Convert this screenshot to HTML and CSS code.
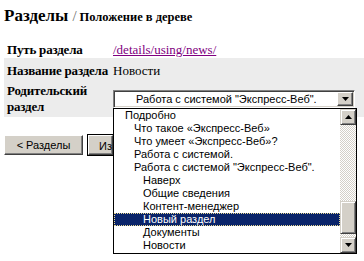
FILE: index.html
```html
<!DOCTYPE html>
<html lang="ru">
<head>
<meta charset="utf-8">
<title>Разделы / Положение в дереве</title>
<link rel="stylesheet" href="styles.css">
</head>
<body>
<h1 class="title"><span class="main">Разделы</span><span class="sep">/</span><span class="sub">Положение в дереве</span></h1>
<div class="form">
  <div class="row r1">
    <div class="label">Путь раздела</div>
    <div class="value"><a class="path" href="#">/details/using/news/</a></div>
  </div>
  <div class="row alt r2">
    <div class="label">Название раздела</div>
    <div class="value">Новости</div>
  </div>
  <div class="row alt r3">
    <div class="label">Родительский<br>раздел</div>
    <div class="value">
      <div class="select">
        <div class="select-text">Работа с системой "Экспресс-Веб".</div>
        <div class="select-btn"><svg width="7" height="4" viewBox="0 0 7 4"><path d="M0 0h7L3.5 4z" fill="#000"/></svg></div>
        <div class="dropdown">
          <div class="options">
            <div class="opt l0">Подробно</div>
            <div class="opt l1">Что такое «Экспресс-Веб»</div>
            <div class="opt l1">Что умеет «Экспресс-Веб»?</div>
            <div class="opt l1">Работа с системой.</div>
            <div class="opt l1">Работа с системой "Экспресс-Веб".</div>
            <div class="opt l2">Наверх</div>
            <div class="opt l2">Общие сведения</div>
            <div class="opt l2">Контент-менеджер</div>
            <div class="opt l2 sel">Новый раздел</div>
            <div class="opt l2">Документы</div>
            <div class="opt l2">Новости</div>
          </div>
          <div class="scrollbar">
            <div class="sb-btn"><svg width="7" height="4" viewBox="0 0 7 4"><path d="M3.5 0L7 4H0z" fill="#000"/></svg></div>
            <div class="track t1"></div>
            <div class="thumb"></div>
            <div class="track t2"></div>
            <div class="sb-btn"><svg width="7" height="4" viewBox="0 0 7 4"><path d="M0 0h7L3.5 4z" fill="#000"/></svg></div>
          </div>
        </div>
      </div>
    </div>
  </div>
</div>
<div class="buttons">
  <button class="btn back">&lt; Разделы</button>
  <button class="btn default"><span class="btn-clip">Изменить</span></button>
</div>
</body>
</html>
```
FILE: styles.css
```css
html, body {
  margin: 0;
  padding: 0;
  background: #fff;
}
body {
  width: 364px;
  height: 261px;
  overflow: hidden;
  font-family: "Liberation Serif", "Times New Roman", serif;
  color: #000;
}
.title {
  margin: 0;
  padding: 0 0 0 4px;
  height: 20px;
  line-height: 20px;
  font-weight: bold;
  white-space: nowrap;
}
.title .main {
  font-size: 17px;
}
.title .sep {
  font-size: 15px;
  color: #707070;
  font-weight: normal;
  margin: 0 3px 0 4px;
}
.title .sub {
  font-size: 12.5px;
}
.form {
  margin: 20px 0 0 4px;
  font-size: 13px;
  line-height: 16px;
}
.row {
  box-sizing: border-box;
  display: grid;
  grid-template-columns: 109px 1fr;
  align-items: center;
}
.alt {
  background: #ececec;
}
.r1 {
  height: 18px;
  padding-top: 2px;
}
.r2 {
  height: 22px;
  padding-top: 3px;
}
.r3 {
  height: 37px;
}
.label {
  font-weight: bold;
  padding-left: 3px;
  white-space: nowrap;
  letter-spacing: -0.2px;
}
.value {
  white-space: nowrap;
}
.path {
  color: #800080;
  text-decoration: underline;
}
.select {
  position: relative;
  box-sizing: border-box;
  width: 242px;
  height: 18px;
  margin-top: 1px;
  border-top: 1px solid #808080;
  border-left: 1px solid #808080;
  border-right: 1px solid #fff;
  border-bottom: 1px solid #fff;
  box-shadow: inset 1px 1px 0 #404040, inset -1px -1px 0 #d4d0c8;
  background: #fff;
  display: flex;
  align-items: center;
  font-family: "Liberation Sans", Arial, sans-serif;
  font-size: 11px;
}
.select-text {
  flex: 1;
  padding-left: 22px;
  line-height: 14px;
}
.select-btn {
  box-sizing: border-box;
  width: 16px;
  height: 14px;
  margin-right: 1px;
  background: #d4d0c8;
  border-top: 1px solid #fff;
  border-left: 1px solid #fff;
  border-right: 1px solid #404040;
  border-bottom: 1px solid #404040;
  box-shadow: inset -1px -1px 0 #808080;
  display: flex;
  align-items: center;
  justify-content: center;
}
.dropdown {
  position: absolute;
  left: -1px;
  top: 17px;
  box-sizing: border-box;
  width: 244px;
  height: 146px;
  border: 1px solid #000;
  background: #fff;
  display: flex;
  z-index: 2;
}
.options {
  flex: 1;
  display: flex;
  flex-direction: column;
}
.opt {
  box-sizing: border-box;
  height: 13px;
  line-height: 13px;
  white-space: nowrap;
}
.l0 { padding-left: 11px; }
.l1 { padding-left: 20px; }
.l2 { padding-left: 29px; }
.sel {
  background: #0a246a;
  color: #fff;
  outline: 1px dotted #e8d890;
  outline-offset: -1px;
}
.scrollbar {
  width: 16px;
  display: flex;
  flex-direction: column;
}
.sb-btn {
  box-sizing: border-box;
  height: 16px;
  background: #d4d0c8;
  border-top: 1px solid #d4d0c8;
  border-left: 1px solid #d4d0c8;
  border-right: 1px solid #404040;
  border-bottom: 1px solid #404040;
  box-shadow: inset 1px 1px 0 #fff, inset -1px -1px 0 #808080;
  display: flex;
  align-items: center;
  justify-content: center;
}
.track {
  background-color: #fff;
  background-image: conic-gradient(#d4d0c8 25%, #fff 0 50%, #d4d0c8 0 75%, #fff 0);
  background-size: 2px 2px;
}
.t1 { height: 76px; }
.t2 { flex: 1; }
.thumb {
  box-sizing: border-box;
  height: 33px;
  background: #d4d0c8;
  border-top: 1px solid #d4d0c8;
  border-left: 1px solid #d4d0c8;
  border-right: 1px solid #404040;
  border-bottom: 1px solid #404040;
  box-shadow: inset 1px 1px 0 #fff, inset -1px -1px 0 #808080;
}
.buttons {
  display: flex;
  gap: 5px;
  margin: 18px 0 0 4px;
}
.btn {
  box-sizing: border-box;
  height: 20px;
  padding: 0;
  margin: 0;
  font-family: "Liberation Sans", Arial, sans-serif;
  font-size: 11px;
  color: #000;
  background: #d4d0c8;
  border-top: 1px solid #fff;
  border-left: 1px solid #fff;
  border-right: 1px solid #404040;
  border-bottom: 1px solid #404040;
  box-shadow: inset -1px -1px 0 #808080;
}
.back {
  width: 79px;
}
.default {
  width: 25px;
  outline: 1px solid #000;
  padding-left: 10px;
  text-align: left;
  overflow: hidden;
  white-space: nowrap;
}
.btn-clip {
  display: inline-block;
  vertical-align: middle;
  width: 14px;
  overflow: hidden;
}
```
